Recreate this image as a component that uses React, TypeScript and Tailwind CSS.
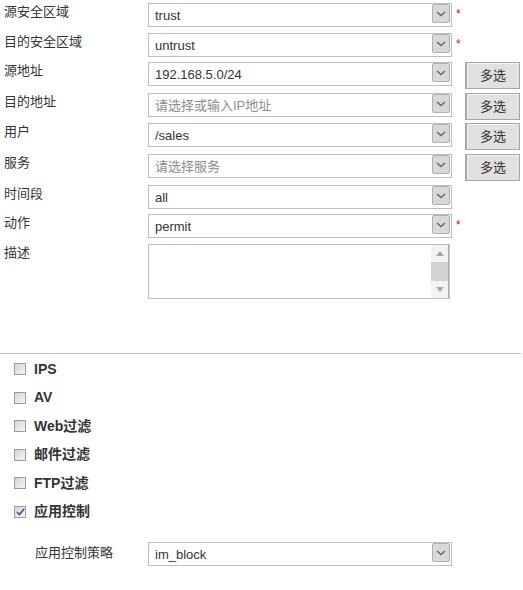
import React from 'react';

type Row = {
  label: string;
  value?: string;
  placeholder?: string;
  required?: boolean;
  multi?: boolean;
  gap: string;
};

const rows: Row[] = [
  { label: '源安全区域', value: 'trust', required: true, gap: 'mt-[3px]' },
  { label: '目的安全区域', value: 'untrust', required: true, gap: 'mt-[6px]' },
  { label: '源地址', value: '192.168.5.0/24', multi: true, gap: 'mt-[5px]' },
  { label: '目的地址', placeholder: '请选择或输入IP地址', multi: true, gap: 'mt-[7px]' },
  { label: '用户', value: '/sales', multi: true, gap: 'mt-[6px]' },
  { label: '服务', placeholder: '请选择服务', multi: true, gap: 'mt-[7px]' },
  { label: '时间段', value: 'all', gap: 'mt-[7px]' },
  { label: '动作', value: 'permit', required: true, gap: 'mt-[5px]' },
];

const modules = [
  { name: 'IPS', checked: false, h: 'h-[28px]' },
  { name: 'AV', checked: false, h: 'h-[29px]' },
  { name: 'Web过滤', checked: false, h: 'h-[28px]' },
  { name: '邮件过滤', checked: false, h: 'h-[29px]' },
  { name: 'FTP过滤', checked: false, h: 'h-[28px]' },
  { name: '应用控制', checked: true, h: 'h-[29px]' },
];

const font = "font-['Liberation_Sans','Noto_Sans_CJK_SC',sans-serif]";

const DropButton = () => (
  <div className="mr-[1px] flex h-[19px] w-[18px] shrink-0 items-center justify-center rounded-[2px] border border-[#b0b0b0] bg-[#d8d8d8]">
    <svg width="10" height="6" viewBox="0 0 10 6">
      <path d="M1 1 L5 4.5 L9 1" fill="none" stroke="#6b6b6b" strokeWidth="1.6" />
    </svg>
  </div>
);

const Select = ({ value, placeholder }: { value?: string; placeholder?: string }) => (
  <div className="flex h-[24px] w-[304px] shrink-0 items-start border border-[#bdbdbd] bg-white">
    <div
      className={`flex-1 truncate pl-[6px] pt-[4px] text-[13px] leading-[16px] ${
        value ? 'text-[#333]' : 'text-[#8c8c8c]'
      }`}
    >
      {value ?? placeholder}
    </div>
    <DropButton />
  </div>
);

const Checkbox = ({ checked }: { checked: boolean }) => (
  <div className="flex h-[12px] w-[12px] items-center justify-center border border-[#9c9c9c] bg-gradient-to-br from-[#d4d4d4] to-[#f6f6f6]">
    {checked && (
      <svg width="9" height="8" viewBox="0 0 9 8">
        <path d="M1 4 L3.5 6.5 L8 1" fill="none" stroke="#3a4e8c" strokeWidth="1.6" />
      </svg>
    )}
  </div>
);

export default function App() {
  return (
    <div className={`h-[590px] w-[523px] overflow-hidden bg-white ${font} text-[#333]`}>
      {rows.map((r) => (
        <div key={r.label} className={`flex h-[24px] items-start ${r.gap}`}>
          <div className="w-[148px] shrink-0 pl-[4px] text-[13px] leading-[18px]">{r.label}</div>
          <Select value={r.value} placeholder={r.placeholder} />
          {r.required && (
            <span className="ml-[4px] mt-[3px] text-[12px] leading-[16px] text-[#ff0000]">*</span>
          )}
          {r.multi && (
            <button className="ml-[13px] h-[27px] w-[55px] shrink-0 border border-l-[2px] border-[#a6a6a6] bg-[#e1e1e1] text-[13px] text-[#333] shadow-[inset_1px_1px_0_#f4f4f4]">
              多选
            </button>
          )}
        </div>
      ))}

      <div className="mt-[6px] flex items-start">
        <div className="w-[148px] shrink-0 pl-[4px] text-[13px] leading-[18px]">描述</div>
        <div className="flex h-[55px] w-[302px] border border-[#bdbdbd] bg-white">
          <div className="flex-1" />
          <div className="flex w-[18px] flex-col border-r border-[#b0b0b0]">
            <div className="flex h-[17px] items-center justify-center bg-[#f3f3f3]">
              <svg width="8" height="5" viewBox="0 0 8 5">
                <path d="M0 5 L4 0 L8 5 Z" fill="#a8a8a8" />
              </svg>
            </div>
            <div className="flex-1 bg-[#d2d2d2]" />
            <div className="flex h-[17px] items-center justify-center bg-[#f3f3f3]">
              <svg width="8" height="5" viewBox="0 0 8 5">
                <path d="M0 0 L8 0 L4 5 Z" fill="#a8a8a8" />
              </svg>
            </div>
          </div>
        </div>
      </div>

      <div className="mt-[54px] h-px w-[521px] bg-[#bcbcbc]" />

      <div className="mt-[1px] flex flex-col">
        {modules.map((m) => (
          <div key={m.name} className={`flex items-center pl-[14px] ${m.h}`}>
            <Checkbox checked={m.checked} />
            <span className="ml-[8px] text-[14px] font-bold text-[#333]">{m.name}</span>
          </div>
        ))}
      </div>

      <div className="mt-[16px] flex items-start">
        <div className="w-[148px] shrink-0 pl-[35px] pt-[2px] text-[13px] leading-[18px]">应用控制策略</div>
        <Select value="im_block" />
      </div>
    </div>
  );
}
